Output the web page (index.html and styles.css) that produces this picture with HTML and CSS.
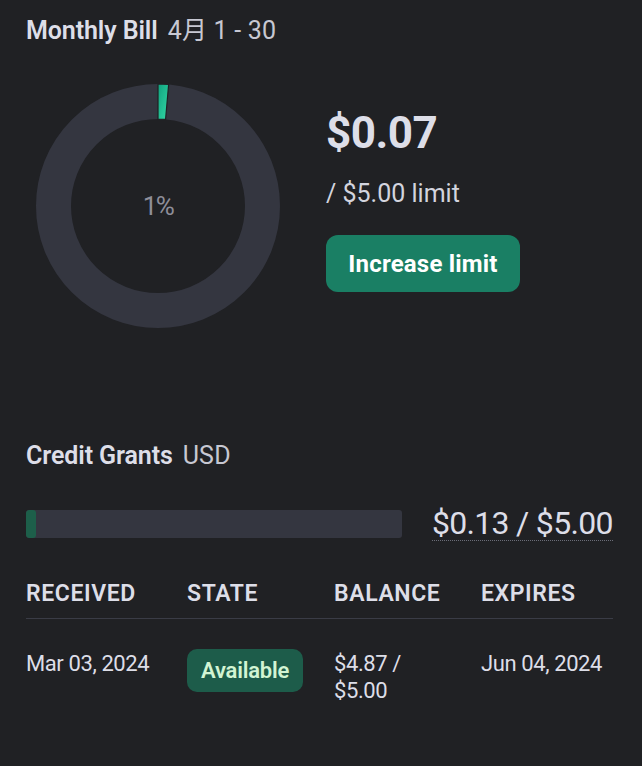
FILE: index.html
```html
<!DOCTYPE html>
<html>
<head>
<meta charset="utf-8">
<link rel="stylesheet" href="styles.css">
</head>
<body>
<main class="page">
  <section class="bill">
    <h2 class="title"><span class="title-main">Monthly Bill</span><span class="title-sub">4月 1 - 30</span></h2>
    <div class="bill-body">
      <div class="donut">
        <svg width="244" height="244" viewBox="0 0 244 244">
          <defs>
            <linearGradient id="seg" x1="0" y1="0" x2="1" y2="1">
              <stop offset="0" stop-color="#10a37f"/>
              <stop offset="1" stop-color="#34d8a6"/>
            </linearGradient>
          </defs>
          <circle cx="122" cy="122" r="104.5" fill="none" stroke="#343640" stroke-width="35"/>
          <path d="M122 0 A122 122 0 0 1 132.63 0.46 L129.58 35.33 A87 87 0 0 0 122 35 Z" fill="url(#seg)" stroke="#202124" stroke-width="1.2"/>
        </svg>
        <span class="donut-label">1%</span>
      </div>
      <div class="bill-info">
        <div class="amount">$0.07</div>
        <div class="limit">/ $5.00 limit</div>
        <button class="btn">Increase limit</button>
      </div>
    </div>
  </section>

  <section class="grants">
    <h2 class="title"><span class="title-main">Credit Grants</span><span class="title-sub">USD</span></h2>
    <div class="grant-bar-row">
      <div class="bar"><div class="bar-fill" style="width:2.6%"></div></div>
      <span class="bar-text">$0.13 / $5.00</span>
    </div>
    <div class="table">
      <div class="th">RECEIVED</div>
      <div class="th">STATE</div>
      <div class="th">BALANCE</div>
      <div class="th">EXPIRES</div>
      <div class="td">Mar 03, 2024</div>
      <div class="td td-badge"><span class="badge">Available</span></div>
      <div class="td">$4.87 /<br>$5.00</div>
      <div class="td">Jun 04, 2024</div>
    </div>
  </section>
</main>
</body>
</html>
```

FILE: styles.css
```css
html, body {
  margin: 0;
  padding: 0;
  background: #202124;
}
body {
  font-family: "Roboto", "Noto Sans CJK SC", sans-serif;
  color: #dddee8;
  width: 642px;
  height: 766px;
  overflow: hidden;
}
.page {
  padding: 17px 29px 0 26px;
}
.title {
  margin: 0;
  font-size: 25px;
  line-height: 28px;
  font-weight: 600;
  display: flex;
  gap: 10px;
  letter-spacing: -0.1px;
}
.title-sub {
  font-weight: 400;
  color: #c7c8d2;
  letter-spacing: 0.2px;
}
.bill-body {
  display: flex;
  align-items: flex-start;
  margin-top: 39px;
}
.donut {
  position: relative;
  width: 244px;
  height: 244px;
  margin-left: 10px;
}
.donut svg {
  display: block;
}
.donut-label {
  position: absolute;
  left: 0;
  right: 0;
  top: 108px;
  text-align: center;
  font-size: 26px;
  line-height: 28px;
  color: #8e8e99;
  letter-spacing: -1.5px;
}
.bill-info {
  margin-left: 46px;
  padding-top: 23px;
  display: flex;
  flex-direction: column;
  align-items: flex-start;
}
.amount {
  font-size: 44px;
  font-weight: 700;
  line-height: 52px;
  letter-spacing: -0.5px;
}
.limit {
  margin-top: 20px;
  font-size: 25px;
  line-height: 30px;
  letter-spacing: 0;
  color: #d3d4de;
}
.btn {
  margin-top: 26px;
  width: 194px;
  height: 57px;
  border: none;
  border-radius: 12px;
  background: #1a7f64;
  color: #ffffff;
  font-family: inherit;
  font-size: 24px;
  font-weight: 700;
  letter-spacing: 0.2px;
  padding: 0;
}
.grants {
  margin-top: 114px;
}
.grant-bar-row {
  display: flex;
  align-items: center;
  gap: 30px;
  margin-top: 36px;
}
.bar {
  width: 376px;
  height: 28px;
  background: #343640;
  border-radius: 3px;
  overflow: hidden;
}
.bar-fill {
  height: 100%;
  background: #1d5f4a;
  border-radius: 3px;
}
.bar-text {
  font-size: 32px;
  line-height: 34px;
  letter-spacing: -0.7px;
  border-bottom: 1px dotted #6b6d78;
  color: #dddee8;
}
.table {
  display: grid;
  grid-template-columns: 161px 147px 147px 1fr;
  margin-top: 40px;
}
.th {
  font-size: 23px;
  font-weight: 600;
  line-height: 26px;
  letter-spacing: 0.6px;
  padding-bottom: 11px;
  border-bottom: 1px solid #3a3c46;
}
.td {
  padding-top: 31px;
  font-size: 22px;
  line-height: 27px;
  letter-spacing: -0.4px;
}
.td-badge {
  padding-top: 30px;
}
.badge {
  display: inline-block;
  background: #1d5c4a;
  color: #d2f4d3;
  font-weight: 600;
  font-size: 22px;
  line-height: 27px;
  padding: 8px 14px;
  border-radius: 10px;
  letter-spacing: -0.2px;
}
```
